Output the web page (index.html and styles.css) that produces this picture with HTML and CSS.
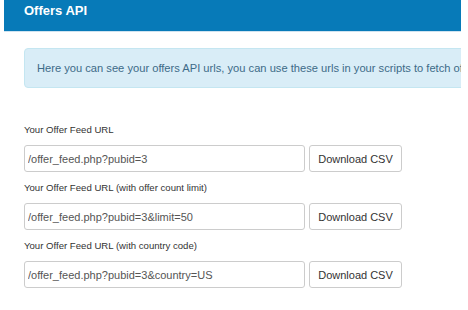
FILE: index.html
```html
<!DOCTYPE html>
<html lang="en">

<head>
    <meta charset="UTF-8">
    <meta name="viewport" content="width=device-width, initial-scale=1.0">
    <title>Offers API</title>
    <link rel="stylesheet" href="styles.css">
</head>

<body>
    <div class="page">
        <div class="page-header">
            <h1>Offers API</h1>
        </div>

        <div class="page-body">
            <div class="alert-info">
                Here you can see your offers API urls, you can use these urls in your scripts to fetch offers automatically.
            </div>

            <div class="feed-group">
                <label class="feed-label">Your Offer Feed URL</label>
                <div class="feed-row">
                    <input class="feed-input" type="text" value="/offer_feed.php?pubid=3" readonly>
                    <button class="feed-btn">Download CSV</button>
                </div>
            </div>

            <div class="feed-group">
                <label class="feed-label">Your Offer Feed URL (with offer count limit)</label>
                <div class="feed-row">
                    <input class="feed-input" type="text" value="/offer_feed.php?pubid=3&amp;limit=50" readonly>
                    <button class="feed-btn">Download CSV</button>
                </div>
            </div>

            <div class="feed-group">
                <label class="feed-label">Your Offer Feed URL (with country code)</label>
                <div class="feed-row">
                    <input class="feed-input" type="text" value="/offer_feed.php?pubid=3&amp;country=US" readonly>
                    <button class="feed-btn">Download CSV</button>
                </div>
            </div>
        </div>
    </div>
</body>

</html>
```

FILE: styles.css
```css
* {
    margin: 0;
    padding: 0;
    box-sizing: border-box;
}

body {
    font-family: "Liberation Sans", Arial, sans-serif;
    background-color: #fff;
    color: #333;
}

.page {
    width: 457px;
    margin-left: 4px;
    overflow: hidden;
}

.page-header {
    height: 32px;
    background-color: #077ab8;
    border-bottom: 1px solid #cfe3f0;
    padding: 3px 20px 0;
}

.page-header h1 {
    font-size: 13px;
    font-weight: bold;
    color: #fff;
    line-height: 16px;
}

.page-body {
    padding: 16px 0 0 20px;
}

.alert-info {
    width: 460px;
    height: 40px;
    padding: 0 12px;
    display: flex;
    align-items: center;
    white-space: nowrap;
    font-size: 11.15px;
    color: #3d6b88;
    background-color: #d9edf7;
    border: 1px solid #c4e6f1;
    border-radius: 4px;
    margin-bottom: 35px;
}

.feed-group {
    margin-bottom: 9px;
}

.feed-label {
    display: block;
    font-size: 9.6px;
    line-height: 14px;
    color: #333;
    margin-bottom: 8px;
}

.feed-row {
    display: flex;
    gap: 4px;
}

.feed-input {
    width: 281px;
    height: 27px;
    padding: 0 3px;
    font-family: inherit;
    font-size: 11px;
    color: #555;
    border: 1px solid #ccc;
    border-radius: 3px;
    outline: none;
}

.feed-btn {
    width: 93px;
    height: 27px;
    font-family: inherit;
    font-size: 11px;
    color: #333;
    background-color: #fff;
    border: 1px solid #ccc;
    border-radius: 3px;
    cursor: pointer;
}
```
